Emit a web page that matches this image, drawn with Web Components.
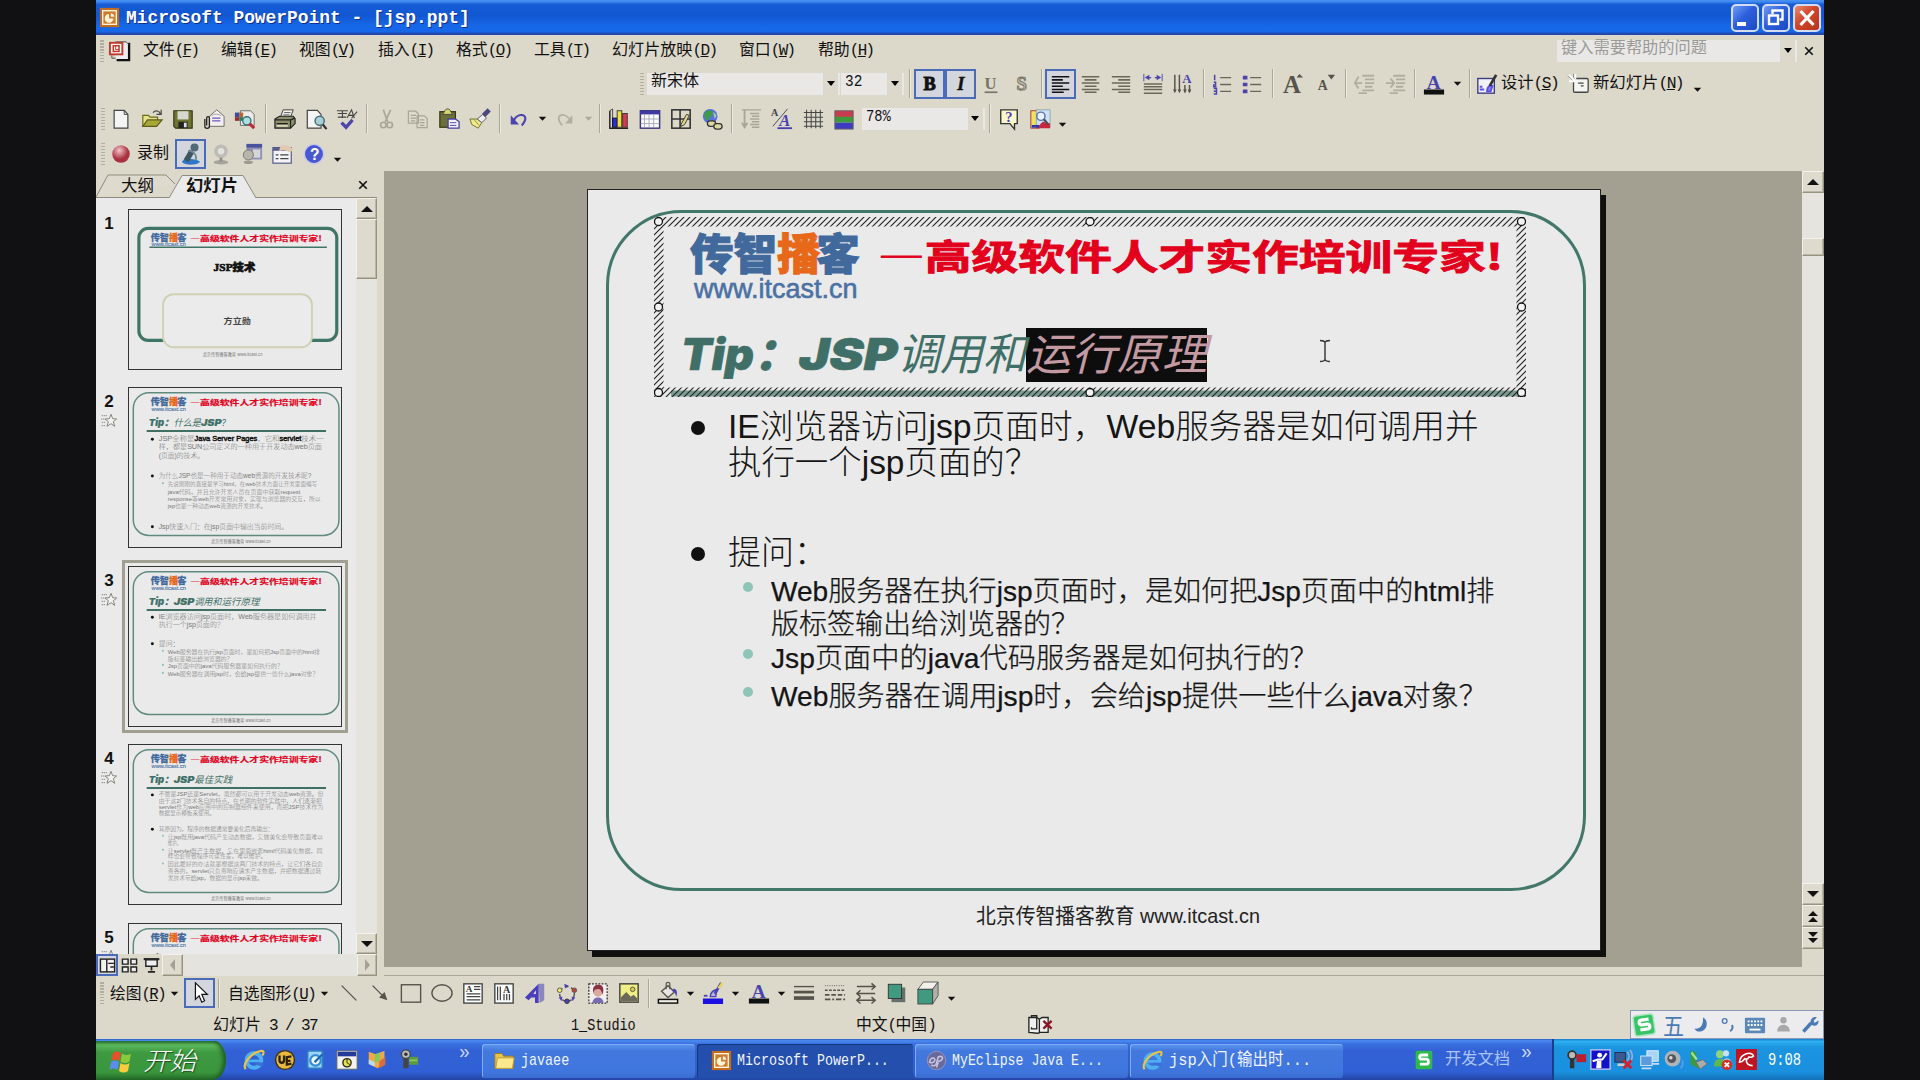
<!DOCTYPE html>
<html lang="zh-CN">
<head>
<meta charset="utf-8">
<title>Microsoft PowerPoint - [jsp.ppt]</title>
<style>
html,body{margin:0;height:1080px;overflow:hidden;background:#111113}
body{display:flex;justify-content:center}
</style>
</head>
<body>
<ppt-app></ppt-app>
<script>
const UI = '"Liberation Mono","Noto Sans CJK SC",monospace';
const make = (host, css, html) => {
  const r = host.shadowRoot || host.attachShadow({mode:'open'});
  r.innerHTML = '<style>*{box-sizing:border-box}' + css + '</style>' + html;
  return r;
};

/* ---------- icon drawings, 24x24 unit boxes ---------- */
const A = (x,y,s,c,extra='') => `<text x="${x}" y="${y}" font-family="Liberation Serif,serif" font-weight="bold" font-size="${s}" fill="${c}" ${extra}>`;
const ie = '<circle cx="12" cy="12.5" r="8" fill="none" stroke="#4fb0f0" stroke-width="4.4"/><path d="M6 13H18" stroke="#4fb0f0" stroke-width="3"/><path d="M13 14.6h9v4.5l-9-2z" fill="#3b6fd8"/><path d="M3 22C-1 17 8 4 20 2c4-.5 2 4 1 5" fill="none" stroke="#e8c44a" stroke-width="2.4"/>';
const ppt = '<rect x="1" y="1" width="22" height="22" fill="#c46a1c"/><rect x="4.2" y="4.2" width="15.6" height="15.6" fill="#cf7a2c" stroke="#fff3dc" stroke-width="1.6"/><path d="M11.5 8a5 5 0 1 0 5 5h-5z" fill="#fff3dc"/><path d="M13.5 7v4h4c0-2-2-4-4-4z" fill="#fff3dc"/>';
const person = '<path d="M6 23c0-4 3-6 6-6s6 2 6 6z" fill="#7b6bb0"/><circle cx="12" cy="11" r="5" fill="#d9a9a0"/><path d="M7 13c-2-9 3-10 5-10s8 0 5 11c-1-5-3-7-6-6-3 0-4 2-4 5z" fill="#8a3040"/>';
const I = {
 ppt,
 doc:'<path d="M8 3h14v18H8z" fill="#eee"/><path d="M22 4v18H9" fill="none" stroke="#111" stroke-width="2.4"/><path d="M8 3h11l3 3" fill="none" stroke="#444"/><rect x="2" y="4" width="13" height="12" fill="#fff" stroke="#c0392b" stroke-width="2"/><rect x="5.5" y="7" width="6" height="6" fill="none" stroke="#c0392b" stroke-width="1.6"/><path d="M8 7v4h3" fill="none" stroke="#c0392b"/><path d="M4 17v3h4" fill="none" stroke="#555"/>',
 new:'<path d="M4.500 2.500h11l4 4.500v15h-15z" fill="#f4f4f2" stroke="#444" stroke-width="1.300"/><path d="M15.500 2.500v4.500h4" fill="none" stroke="#444"/>',
 open:'<path d="M2 20V8h6l2 2h8v3" fill="#e9e28c" stroke="#6c6c18" stroke-width="1.3"/><path d="M2 20l5-7h16l-6 7z" fill="#a8a838" stroke="#5c5c14" stroke-width="1.3"/><path d="M13 5c3-3 7-2 8 1m1-4v5h-5" fill="none" stroke="#444" stroke-width="1.3"/>',
 save:'<path d="M2 3h20v19H4l-2-2z" fill="#6f7530" stroke="#34380f" stroke-width="1.3"/><rect x="6" y="3.500" width="12" height="9" fill="#d6d8d0"/><rect x="7" y="15" width="10" height="7" fill="#222"/><rect x="13" y="16" width="3" height="5" fill="#ddd"/>',
 mail:'<path d="M7 9l8-7 8 7v11H7z" fill="#f3f1ee" stroke="#666"/><path d="M10 11h9M10 14h9" stroke="#6a58c8" stroke-width="1.5"/><path d="M9 9c2-3 9-3 11 0" fill="none" stroke="#999"/><path d="M2 12v8c0 3 5 3 5 0v-9c0-2-3-2-3 0v8" fill="none" stroke="#222" stroke-width="1.4"/>',
 search:'<path d="M7 3h11l4 4v12H7z" fill="#ecebea" stroke="#666"/><rect x="1" y="5" width="5" height="5" fill="#3b4da0"/><rect x="6" y="5" width="4" height="5" fill="#b86430"/><rect x="1" y="10" width="5" height="4" fill="#9d2b2b"/><rect x="6" y="10" width="4" height="4" fill="#2e7d5b"/><circle cx="14" cy="14" r="4.500" fill="#a9e0e0" stroke="#3d6f78" stroke-width="1.5"/><path d="M17 17l5 5" stroke="#c3283c" stroke-width="3.4"/>',
 print:'<path d="M7 10l3-8h11l-3 8z" fill="#f1f1ef" stroke="#333"/><path d="M11 5h7M10 7.500h7" stroke="#555"/><path d="M1 12l5-3h15l2 3v5l-5 5H1z" fill="#8d8f6a" stroke="#222" stroke-width="1.3"/><path d="M1 13h17v9M18 13l5-2M3 17h12" fill="none" stroke="#222" stroke-width="1.3"/><path d="M3 19.500h12" stroke="#d8d8c0" stroke-width="2"/>',
 preview:'<path d="M2.500 2.500h11l4 4.500v15h-15z" fill="#f4f4f2" stroke="#444" stroke-width="1.300"/><circle cx="16" cy="14" r="5" fill="#a9d0d4" stroke="#48707a" stroke-width="1.6"/><path d="M19.500 18l4 5" stroke="#333" stroke-width="2.400"/>',
 spell:'<path d="M1 3h12M2 6h10M2 10h9M7 3v8M12 11l5-9 3 9M13 8h6M17 11l6-7" stroke="#444" stroke-width="1.2" fill="none"/><path d="M6 16l5 5 7-8" fill="none" stroke="#4d46a8" stroke-width="3.6"/>',
 cut:'<path d="M8 2l5 14M16 2l-6 13" stroke="#aaa695" stroke-width="1.8"/><circle cx="8" cy="18.500" r="3" fill="none" stroke="#aaa695" stroke-width="1.8"/><circle cx="15" cy="18.500" r="3" fill="none" stroke="#aaa695" stroke-width="1.8"/>',
 copy:'<g fill="#dedacd" stroke="#a9a594" stroke-width="1.3"><path d="M1.500 3.500h8l3 3v10h-11zM11 8.500h8l3 3v10H11z"/><path d="M4 8h6M4 11h6M4 14h5M14 13h5M14 16h5M14 19h5"/></g>',
 paste:'<rect x="2" y="4" width="17" height="17" fill="#6b7038" stroke="#34360f" stroke-width="1.3"/><path d="M7 4c1-4 6-4 7 0l2 3H5z" fill="#d8d26a" stroke="#444"/><path d="M11 12h8l4 3v7H11z" fill="#f4f2fa" stroke="#4a40a0" stroke-width="1.4"/><path d="M13 16h7M13 19h7" stroke="#4a40a0"/>',
 brush:'<path d="M1 12h8l5 4-4 6-7-4z" fill="#efe98c" stroke="#6c6c30"/><path d="M9 12l6-5 4 4-5 5z" fill="#eee" stroke="#555"/><path d="M16 8l6-6" stroke="#4b4680" stroke-width="5"/><path d="M5 12l6 7" stroke="#8a8a4a"/>',
 undo:'<path d="M6 14C10 6 18 6 19 11c0 3-2 6-4 8" fill="none" stroke="#4a43b0" stroke-width="2.2"/><path d="M3 8v10h9z" fill="#4a43b0"/>',
 redo:'<path d="M18 14C14 6 6 6 5 11c0 3 2 6 4 8" fill="none" stroke="#b4b0a0" stroke-width="1.8"/><path d="M20 8v9h-8z" fill="#b4b0a0"/>',
 chart:'<path d="M2 3v19h20" fill="none" stroke="#222" stroke-width="1.6"/><path d="M2 3l3-2v19" fill="none" stroke="#444"/><rect x="5" y="11" width="5" height="10" fill="#2b2be0" stroke="#111"/><rect x="10" y="3" width="5" height="18" fill="#f0e23a" stroke="#333"/><rect x="16" y="6" width="5" height="15" fill="#d83a50" stroke="#333"/>',
 table:'<rect x="1.500" y="3" width="21" height="19" fill="#fbfbfb" stroke="#3d3a7c" stroke-width="1.600"/><rect x="1.500" y="3" width="21" height="4" fill="#3f3aa0"/><path d="M6 7v14M11 7v14M16 7v14M2 12h20M2 17h20" stroke="#a8a8b8"/>',
 tabpen:'<rect x="2" y="2" width="20" height="20" fill="none" stroke="#333" stroke-width="1.700"/><path d="M11 2v20M2 12h20" stroke="#333" stroke-width="1.7"/><path d="M12 18l6-11 3 1-5 10-4 2z" fill="#e4dc84" stroke="#333"/>',
 link:'<circle cx="10" cy="9" r="8" fill="#5a6fe0"/><path d="M6 3c5-2 8 1 7 4s-4 2-4 5-4 1-5-2 0-6 2-7z" fill="#3f9a4a"/><path d="M13 4l4 4-2 4z" fill="#9fd0a0"/><rect x="7" y="14" width="9" height="6" rx="3" fill="#ddd8a0" stroke="#333" stroke-width="1.400"/><rect x="14" y="17" width="9" height="6" rx="3" fill="#ddd8a0" stroke="#333" stroke-width="1.400"/>',
 expand:'<path d="M5 2v17M2 16l3 5 3-5" fill="none" stroke="#aaa695" stroke-width="2"/><path d="M2 2h21M11 6h10M13 9h8M11 12h10M13 15h8M11 18h10M13 21h8" stroke="#aaa695" stroke-width="1.500"/>',
 aa:`<path d="M2 20L18 1" stroke="#444"/>${A(0,9,11,'#444')}A</text>${A(9,20,18,'#4a3fb0','font-style="italic"')}A</text><path d="M7 22h16" stroke="#4a3fb0" stroke-width="2"/>`,
 grid:'<path d="M5 2v20M10 2v20M15 2v20M20 2v20M2 5h21M2 10h21M2 15h21M2 20h21" stroke="#444" stroke-width="1.100"/>',
 color:'<rect x="2" y="3" width="20" height="7" fill="#c83c50"/><rect x="2" y="9.500" width="20" height="6.500" fill="#3f9a3c"/><rect x="2" y="16" width="20" height="7" fill="#3d3cc0"/><rect x="2" y="3" width="20" height="20" fill="none" stroke="#666"/>',
 qhelp:`<path d="M3 2h18v15h-3v6l-5-6H3z" fill="#fbf8cc" stroke="#333" stroke-width="1.500"/>${A(8,15,16,'#4a3fb0')}?</text>`,
 research:'<rect x="2" y="3" width="9" height="19" fill="#f1df62" stroke="#a33"/><rect x="8" y="2" width="15" height="19" fill="#cfe0f4" stroke="#8aa"/><path d="M8 22l7-7 8 2v5z" fill="#c8283c"/><path d="M3 20h8" stroke="#2838b0" stroke-width="3"/><circle cx="13" cy="9" r="4.500" fill="#e8f2ff" stroke="#5a74b8" stroke-width="1.6"/><path d="M16 12l5 6" stroke="#455" stroke-width="2.4"/>',
 bold:A(5,19,20,'#111','stroke="#111"')+'B</text>',
 italic:A(8,19,20,'#111','font-style="italic" stroke="#111" stroke-width=".5"')+'I</text>',
 under:A(5,17,18,'#777465')+'U</text><path d="M5 21h14" stroke="#777465" stroke-width="1.800"/>',
 shadow:A(7,20,20,'#b8b4a4')+'S</text>'+A(6,19,20,'none','stroke="#777465"')+'S</text>',
 al:'<path d="M2 4h19M2 7.500h12M2 11h19M2 14.500h12M2 18h19M2 21h13" stroke="#111" stroke-width="1.700"/>',
 ac:'<path d="M2 4h19M5 7.500h13M2 11h19M5 14.500h13M2 18h19M5 21h13" stroke="#6b685a" stroke-width="1.700"/>',
 ar:'<path d="M2 4h20M9 7.500h13M2 11h20M9 14.500h13M2 18h20M9 21h13" stroke="#6b685a" stroke-width="1.700"/>',
 dist:'<path d="M2 1v8M22 1v8" stroke="#4a43b0"/><path d="M3 5l5-3v6zM21 5l-5-3v6z" fill="#4a43b0"/><path d="M6 5h4M14 5h4" stroke="#4a43b0" stroke-width="1.500"/><path d="M2 12h20M2 15h20M2 18h20M2 22h20" stroke="#6b685a" stroke-width="1.700"/>',
 vert:'<path d="M2 2v18M7 2v18M13 13v8M18 13v8" stroke="#55534a" stroke-width="1.600"/><path d="M0 18l2 4 2-4zM5 18l2 4 2-4zM11 18l2 4 2-4zM16 18l2 4 2-4z" fill="#55534a"/>'+A(10,11,14,'#4a43b0')+'A</text>',
 nums:'<path d="M10 5h12M10 12.500h12M10 20h12" stroke="#6b685a" stroke-width="1.500"/><path d="M4 2v6M3 10h2v3H3v2h3M3 17h3v6H3M3 20h3" stroke="#4a43b0" stroke-width="1.600" fill="none"/>',
 buls:'<path d="M10 5h12M10 12.500h12M10 20h12" stroke="#6b685a" stroke-width="1.500"/><path d="M2 3h5v4H2zM2 10.500h5v4H2zM2 18h5v4H2z" fill="#4a43b0"/>',
 bigA:A(1,22,27,'#55534a')+'A</text><path d="M16 5l3-4 4 4z" fill="#55534a"/>',
 smA:A(4,19,15,'#55534a')+'A</text><path d="M15 2h8l-4 5z" fill="#55534a"/>',
 dec:'<path d="M9 3h13M12 7h10M12 11h10M12 15h8M9 19h13M5 22h9M5 4l-4 7 4 6M1 11h8" stroke="#b2ae9d" stroke-width="2" fill="none"/>',
 inc:'<path d="M9 3h13M12 7h10M12 11h10M12 15h8M9 19h13M5 22h9M6 6l4 5-4 5M1 11h8" stroke="#b2ae9d" stroke-width="2" fill="none"/>',
 fontc:A(4,17,21,'#4a43b0')+'A</text><rect x="1" y="18" width="22" height="5.500" fill="#111"/>',
 design:'<rect x="2" y="6" width="18" height="16" fill="#f2f2f6" stroke="#3d3a80" stroke-width="1.500"/><path d="M4 18h5M4 15h3M12 20c0-5 3-7 6-6l-2 6z" stroke="#5a4fe0" stroke-width="2" fill="#8a7ff0"/><path d="M15 14l7-12" stroke="#333" stroke-width="3"/>',
 nslide:'<rect x="6" y="6" width="16" height="15" rx="1.500" fill="#f4f4f0" stroke="#444" stroke-width="1.400"/><path d="M11 11h6M14 14h3" stroke="#444" stroke-width="1.500"/><path d="M1 2l7 7M8 1v6M1 9h6M2 6l5 2" stroke="#fff" stroke-width="2"/><path d="M0 3l5 5M6 1v4" stroke="#888"/>',
 rec:'<radialGradient id="g" cx=".4" cy=".3"><stop offset="0" stop-color="#f3c4c8"/><stop offset="1" stop-color="#a83040"/></radialGradient><circle cx="12" cy="12" r="10.500" fill="url(#g)"/>',
 mic:'<path d="M3 20c0-4 15-4 18 0-2 3-15 4-18 0z" fill="#2f78c8"/><path d="M13 9l-6 10" stroke="#3e5664" stroke-width="5.500"/><circle cx="15.500" cy="5.500" r="4" fill="#4f6a78"/><path d="M9 9c5 0 9 3 8 9" fill="none" stroke="#6c8694" stroke-width="1.600"/>',
 cam:'<ellipse cx="12" cy="21" rx="8" ry="2.500" fill="#a5a49c"/><circle cx="12" cy="9" r="7.500" fill="#bdbcb6"/><circle cx="12" cy="9" r="3.500" fill="#e2e2de"/><path d="M12 16v4" stroke="#8d8c86" stroke-width="3"/>',
 cam2:'<rect x="6" y="1" width="17" height="17" fill="#8f92b4"/><rect x="6" y="1" width="17" height="4" fill="#4a539c"/><rect x="13" y="7" width="8" height="9" fill="#d4d4dc"/><circle cx="8" cy="13" r="5.500" fill="#b7b5ac" stroke="#77756c"/><ellipse cx="8" cy="21" rx="5" ry="2" fill="#9d9b92"/>',
 cam3:'<rect x="1" y="5" width="20" height="17" fill="#f4f4f8" stroke="#555a88" stroke-width="1.300"/><path d="M1 7h20" stroke="#555a88" stroke-width="3"/><path d="M4 13h3M4 17h3M9 13h9M9 17h9" stroke="#444" stroke-width="1.500"/><path d="M8 9c0-8 6-7 9-6l6 3-3 5c-4-3-8-4-12-2z" fill="#e2c8b0"/>',
 bhelp:`<circle cx="12" cy="12" r="10.500" fill="#4a58d0" stroke="#c4c8ee" stroke-width="1.500"/><text x="7.500" y="18" font-family="Liberation Sans" font-weight="bold" font-size="17" fill="#fff">?</text>`,
 cursor:'<path d="M7 1v18l4-4 3 7 3-1.500-3-7h6z" fill="#fff" stroke="#111" stroke-width="1.300"/>',
 line:'<path d="M4 4l16 16" stroke="#55534a" stroke-width="1.400"/>',
 arrow:'<path d="M4 4l13 13" stroke="#55534a" stroke-width="1.400"/><path d="M20 20l-9-3 6-6z" fill="#55534a"/>',
 rect:'<rect x="1.500" y="3" width="21" height="19" fill="none" stroke="#55534a" stroke-width="1.500"/>',
 oval:'<ellipse cx="12" cy="12" rx="11" ry="9" fill="none" stroke="#55534a" stroke-width="1.500"/>',
 tbox:'<rect x="2" y="2" width="20" height="21" fill="#fff" stroke="#444" stroke-width="1.500"/><path d="M13 5h7M13 8h7M5 13h15M5 16h15M5 19.500h15" stroke="#444" stroke-width="1.500"/>'+A(4,11,10,'#333')+'A</text>',
 vbox:'<rect x="2" y="2" width="20" height="21" fill="#fff" stroke="#444" stroke-width="1.500"/><path d="M5 5v15M8 5v15M12 13v7M15 13v7M18 13v7" stroke="#444" stroke-width="1.400"/>'+A(11,12,11,'#333')+'A</text>',
 wart:'<path d="M16 2h6v18l-5 3z" fill="#8a86c0"/><path d="M1 17L16 2v21h-4v-6H8l-3 3z" fill="#4a3fb8"/><path d="M10 13l3-4v4z" fill="#dcd8ca"/>',
 diag:'<circle cx="12" cy="13" r="8" fill="none" stroke="#555" stroke-width="1.600" stroke-dasharray="4 3"/><circle cx="4" cy="9" r="2.500" fill="#f0e860" stroke="#555"/><circle cx="20" cy="9" r="2.500" fill="#c83c3c" stroke="#555"/><circle cx="12" cy="21" r="2.500" fill="#4a3fb8" stroke="#333"/><path d="M9 2l5 2-4 3z" fill="#4a3fb8"/><path d="M3 17l4-1-1 5zM21 17l-4-1 1 5z" fill="#4a3fb8"/>',
 clip:'<rect x="2" y="2" width="20" height="21" fill="#f1eeee" stroke="#333" stroke-width="1.400" stroke-dasharray="2 1.500"/>'+person,
 pic:'<rect x="2" y="2" width="20" height="20" fill="#f0ee86" stroke="#444" stroke-width="1.600"/><circle cx="16" cy="8" r="2.500" fill="#d8c84a" stroke="#555"/><path d="M3 21v-4l6-6 5 5 3-2 4 4v3z" fill="#6d6a5a"/>',
 fill:'<path d="M5 10l7-6 7 7-7 6z" fill="#e8e6e0" stroke="#55534a" stroke-width="1.500"/><path d="M10 8V2c0-2 4-2 4 0v6" fill="none" stroke="#55534a" stroke-width="1.300"/><path d="M18 7c5 1 4 6 3 9-1-3-1-5-4-6z" fill="#4a43b0"/><rect x="1.500" y="19" width="21" height="4" fill="#efede6" stroke="#111" stroke-width="1.600"/>',
 lcol:'<path d="M9 16c0-6 5-7 7-8l-1 8z" fill="#b8b0f0" stroke="#4a43b0" stroke-width="1.500"/><path d="M14 13l7-12" stroke="#4a43b0" stroke-width="3"/><path d="M18 7l4-6" stroke="#e8d850" stroke-width="2.500"/><path d="M2 15h4" stroke="#4a43b0" stroke-width="2"/><rect x="1" y="18" width="22" height="6" fill="#1c10e0"/>',
 lines:'<path d="M1 5h22" stroke="#55534a" stroke-width="1.500"/><path d="M1 11h22" stroke="#55534a" stroke-width="3"/><path d="M1 17.500h22" stroke="#55534a" stroke-width="4"/>',
 dash:'<path d="M1 4h22" stroke="#55534a" stroke-dasharray="1 1.500"/><path d="M1 9h22" stroke="#55534a" stroke-width="1.500" stroke-dasharray="3 1.500"/><path d="M1 14h22" stroke="#55534a" stroke-width="2" stroke-dasharray="5 2"/><path d="M1 19h22" stroke="#55534a" stroke-width="2" stroke-dasharray="6 2 2 2"/>',
 arrs:'<path d="M2 5h20M18 1.500L22 5l-4 3.500M22 12.500H2M6 9l-4 3.500L6 16M2 20h20M18 16.500l4 3.500-4 3.500M6 16.500L2 20l4 3.500" fill="none" stroke="#55534a" stroke-width="1.600"/>',
 shad:'<rect x="6" y="6" width="15" height="16" fill="#66706a"/><rect x="2.500" y="2.500" width="14.500" height="15.500" fill="#3f9a80" stroke="#333" stroke-width="1"/>',
 cube:'<path d="M1 8l6-8h16l-6 8z" fill="#f2f0ea" stroke="#555"/><path d="M17 8l6-8v15l-6 9z" fill="#b0b2aa" stroke="#555"/><rect x="1" y="8" width="16" height="16" fill="#3f9a80" stroke="#444"/>',
 vnorm:'<rect x="2" y="3" width="20" height="18" fill="#f2f2f2" stroke="#222" stroke-width="2"/><path d="M11 3v18M13 9h8M16 14h5" stroke="#222" stroke-width="2"/>',
 vsort:'<path d="M2 3h8v7H2zM14 3h8v7h-8zM2 14h8v7H2zM14 14h8v7h-8z" fill="#eee" stroke="#222" stroke-width="2"/>',
 vshow:'<path d="M1 3h22" stroke="#222" stroke-width="3"/><path d="M4 4h16v9H4z" fill="#eee" stroke="#222" stroke-width="2"/><path d="M12 13v6M7 21h10" stroke="#222" stroke-width="2.400"/>',
 star:'<path d="M15 2l2.500 6.500 6 .5-5 4 2 7-5.500-4-6 4 2-7-5-4 6.500-.5z" fill="#f2f2f0" stroke="#77756c" stroke-width="1.300"/><path d="M1 4h9M0 9h5M1 14h5M1 19h5" stroke="#77756c" stroke-width="1.200" stroke-dasharray="2 1"/>',
 book:'<path d="M1 4h9l3 2 3-2h7v17h-9l-3 1-10-1z" fill="#f0f0ee" stroke="#222" stroke-width="1.500"/><path d="M13 6v16M4 4v-2h6v15h-6v-2M4 17h6" fill="none" stroke="#222" stroke-width="1.500"/>',
 redx:'<path d="M3 4l18 17M21 4L3 21" stroke="#8a1424" stroke-width="5"/>',
 ie,
 ue:'<circle cx="12" cy="12" r="11" fill="#3a3010"/><circle cx="12" cy="12" r="9.500" fill="#e8b840"/><path d="M6 7v5c0 4 5 4 5 0V7M19 8l-5 1v8l5-1M14 13h4" fill="none" stroke="#2c230a" stroke-width="2.500"/>',
 outlook:'<rect x="3" y="2" width="17" height="20" rx="2" fill="#9fd4f4" stroke="#2f7fc4" stroke-width="2"/><circle cx="12" cy="13" r="6" fill="#e8f6ff" stroke="#2f8fd4" stroke-width="2.500"/><path d="M11 15l9-9" stroke="#1f66b4" stroke-width="2.500"/>',
 win:'<rect x="1" y="2" width="22" height="20" fill="#f2f2ee" stroke="#666"/><rect x="2" y="3" width="20" height="5" fill="#223a9a"/><circle cx="12" cy="15" r="4.500" fill="#e8e04a" stroke="#222" stroke-width="1.500"/><path d="M12 11v4l3 2" stroke="#222" fill="none"/>',
 map:'<path d="M2 3l8 3 10-4v14l-8 6-10-5z" fill="#f0a848"/><path d="M9 6l6-2v9l-6 3z" fill="#8cc858"/><path d="M2 12l7 3v5l-7-3z" fill="#b8dcf4"/><path d="M14 14l7-5v9l-7 4z" fill="#d86c3c"/>',
 tool:'<circle cx="9" cy="6" r="5" fill="#bbb" stroke="#444" stroke-width="1.500"/><rect x="6" y="10" width="6" height="12" fill="#444"/><circle cx="9" cy="6" r="2" fill="#333"/><rect x="13" y="9" width="10" height="9" fill="#5f9a3c"/><path d="M13 13h9" stroke="#8fc45c" stroke-width="2"/>',
 folder:'<path d="M1 4h8l2 3h11v14H1z" fill="#e8c44c" stroke="#9a7a1c"/><path d="M4 9h19l-2 12H2z" fill="#fbe88c" stroke="#b89a3c"/>',
 ecl:'<circle cx="12" cy="12" r="10.500" fill="#6a6a9a"/><circle cx="12" cy="12" r="10.500" fill="none" stroke="#9a98c0"/><path d="M4 14c1-6 7-6 6-2-1 3-5 3-6 2zm2 3c2 2 5 1 6-2l2-7c4-2 7 1 3 4-1 1-3 1-4 0m-1 8 2-6" fill="none" stroke="#c8c4dc" stroke-width="1.800"/>',
 sg:'<rect x="2" y="1" width="20" height="22" rx="2" fill="#2fb84c"/><path d="M17 6H9c-3 0-3 5 0 5h6c3 0 3 6 0 6H7" fill="none" stroke="#fff" stroke-width="3.400"/>',
 sg2:'<g transform="rotate(-8 12 12)"><rect x="1" y="2" width="21" height="21" rx="3" fill="#36c466" stroke="#a8e4bc" stroke-width="1.500"/><path d="M17 7H9c-3 0-3 5 0 5h6c3 0 3 5 0 5H7" fill="none" stroke="#fff" stroke-width="3.400"/></g>',
 t1:'<circle cx="7" cy="7" r="4.500" fill="#bbb" stroke="#333" stroke-width="2"/><rect x="4.500" y="11" width="5" height="11" fill="#333"/><rect x="12" y="6" width="11" height="9" fill="#b8202c"/>',
 t2:'<rect x="1" y="1" width="22" height="22" fill="#1212c8" stroke="#c8c8f4" stroke-width="1.500"/><circle cx="11" cy="7" r="2.800" fill="#fff"/><path d="M7 22l1-9h5v9z" fill="#fff"/><path d="M3 14l6-2h5l5-7" stroke="#fff" stroke-width="2.400" fill="none"/>',
 t3:'<rect x="1" y="4" width="12" height="11" fill="#3c5a8c" stroke="#1c2c50"/><path d="M4 18h8" stroke="#ccc" stroke-width="3"/><path d="M15 3c3 3 3 7 0 10M18 1c4 4 4 10 0 14" stroke="#9fb0d0" stroke-width="1.800" fill="none"/><path d="M11 13l9 9M20 13l-9 9" stroke="#d8202c" stroke-width="3.200"/>',
 t4:'<rect x="9" y="2" width="13" height="12" fill="#a8d4f8" stroke="#e8f4ff"/><rect x="2" y="8" width="13" height="11" fill="#5c9cd8" stroke="#e0f0ff"/><path d="M3 22h11M15 17h8" stroke="#c8dcf0" stroke-width="2"/>',
 t5:'<circle cx="11" cy="11" r="9" fill="#b0b4b8"/><circle cx="10" cy="11" r="5" fill="#50565c"/><circle cx="9" cy="10" r="2" fill="#ddd"/><path d="M20 22c3-3 3-6 2-9" stroke="#5f9cf0" stroke-width="2" fill="none"/>',
 t6:'<path d="M3 2l7 2-1 9 6 4-4 5-8-5z" fill="#3c9a3c"/><path d="M9 15l8-3 5 5-8 6z" fill="#a8aca8" stroke="#666"/><path d="M4 4l6 8" stroke="#a8e488" stroke-width="2.500"/>',
 t7:'<circle cx="9" cy="6" r="4.500" fill="#8fd47c"/><path d="M2 20c0-12 14-12 14 0z" fill="#5cb84c"/><circle cx="16" cy="5" r="3.500" fill="#c8e4f4"/><path d="M12 15c2-7 9-5 10 0z" fill="#b8d0e0"/><circle cx="17" cy="18" r="6" fill="#d83020"/><path d="M14.500 15.500l5 5M19.500 15.500l-5 5" stroke="#fff" stroke-width="2"/>',
 t8:'<rect x="0" y="0" width="24" height="24" fill="#c01420"/><path d="M4 15C5 5 18 2 20 8c-2 2-3 2-5 1-1 2-3 3-5 2-2 3-4 4-6 4zM12 11c-1 6 3 8 7 8" fill="none" stroke="#fff" stroke-width="1.800"/>',
 moon:'<path d="M14 2c8 3 8 19-5 20-3 0-5-1-7-4 10 1 13-8 12-16z" fill="#4a7ab4"/>',
 punct:'<circle cx="7" cy="6" r="3.500" fill="none" stroke="#4a7ab4" stroke-width="2"/><path d="M18 12c2 4 0 8-3 9" stroke="#4a7ab4" stroke-width="3" fill="none"/>',
 kb:'<rect x="1" y="4" width="22" height="17" rx="1" fill="#5c88b8"/><path d="M4 8h17M4 12h17" stroke="#fff" stroke-width="2" stroke-dasharray="2 1.500"/><path d="M6 17h12" stroke="#fff" stroke-width="2"/>',
 user:'<circle cx="12" cy="6" r="4.500" fill="#a8a8a8"/><path d="M3 22c0-13 18-13 18 0z" fill="#a8a8a8"/>',
 wrench:'<path d="M3 21l10-11" stroke="#4a7ab4" stroke-width="4.500"/><path d="M20 3l-4 4 1 3 5-3c1 5-4 9-9 5-3-5 2-11 7-9z" fill="#4a7ab4"/>',
 flag:'<path d="M3 4c3-2 5-2 8 0L9.500 12c-3-2-5-2-8 0z" fill="#e8502c"/><path d="M12 4.500c3 2 6 2 9 0l-1.500 8c-3 2-6 2-9 0z" fill="#8ac83c"/><path d="M1 13c3-2 5-2 8 0l-1.500 8c-3-2-5-2-8 0z" fill="#5c8cf0"/><path d="M10.500 14c3 2 6 2 9 0L18 22c-3 2-6 2-9 0z" fill="#f8cc3c"/>',
 tiny:'<path d="M2 7h20L12 18z" fill="#111"/>',
 tinyg:'<path d="M2 7h20L12 18z" fill="#aeaa9a"/>',
 x:'<path d="M3 3l18 18M21 3L3 21" stroke="#111" stroke-width="4"/>'
};

/* icon centred in a cell: n name, w cell width, s drawn size, on = pressed frame */
class PptIcon extends HTMLElement{
  connectedCallback(){
    const w=this.getAttribute('w')||31, s=this.getAttribute('s')||22, h=this.getAttribute('h')||s, m=this.getAttribute('m')||0;
    make(this,`:host{display:flex;flex:none;align-items:center;justify-content:center;width:${w}px;height:30px;margin-left:${m}px}
     :host([on]){background:#d3d6dc;border:2px solid #4a6cb8}
     :host([low]){padding-top:11px}
     svg{display:block;flex:none;overflow:visible}`,
    `<svg width="${s}" height="${h}" viewBox="0 0 24 24" preserveAspectRatio="none">${I[this.getAttribute('n')]}</svg>`);
  }
}
class BarSep extends HTMLElement{
  connectedCallback(){make(this,`:host{display:flex;flex:none;justify-content:center;width:${this.getAttribute('w')||8}px;height:29px}i{width:1px;background:#aba898;box-shadow:1px 0 #edeae0}`,'<i></i>');}
}
class BarGrip extends HTMLElement{
  connectedCallback(){make(this,`:host{display:block;flex:none;width:4px;height:22px;margin-left:${this.getAttribute('m')||4}px;background:repeating-linear-gradient(#b3af9f 0 1.500px,transparent 1.500px 3px)}`,'');}
}
/* horizontal bar of tools */
class ToolBar extends HTMLElement{
  connectedCallback(){make(this,`:host{display:flex;flex:none;align-items:center;height:${this.getAttribute('h')}px;width:100%;padding-left:${this.getAttribute('p')||0}px;font:16px/20px ${UI};color:#111}
   :host([drop]) ::slotted(fit-text){margin-top:3px}`,'<slot></slot>');}
}
class ComboBox extends HTMLElement{
  connectedCallback(){make(this,`:host{display:flex;flex:none;align-items:stretch;height:22px;width:${this.getAttribute('w')}px;margin-left:${this.getAttribute('m')||0}px;background:#eae8e6;padding-left:4px}
   div{flex:1;display:flex;align-items:center;margin-top:-3px}b{width:15px;background:#dcd9cc;display:flex;align-items:center;justify-content:center;margin-right:2px}`,
   '<div><slot></slot></div><b><svg width="8" height="5"><path d="M0 0h8L4 5z"/></svg></b>');}
}
class XpButton extends HTMLElement{
  connectedCallback(){const d=this.getAttribute('d');const p={up:'M1 10L7 4l6 6z',down:'M1 4h12l-6 6z',left:'M9 1v12L4 7z',right:'M5 1v12l5-6z',up2:'M2 7l5-5 5 5zM2 13l5-5 5 5z',down2:'M2 1h10L7 6zM2 7h10l-5 5z',none:''}[d];
   make(this,`:host{display:flex;flex:none;align-items:center;justify-content:center;background:#dedacd;border:1px solid;border-color:#f4f2ea #96937f #96937f #f4f2ea;box-shadow:inset -1px -1px #bbb7a6}`,
   `<svg width="14" height="14"><path d="${p}" fill="${this.hasAttribute('dis')?'#a5a294':'#111'}"/></svg>`);}
}
/* window caption buttons */
class CaptionButton extends HTMLElement{
  connectedCallback(){const k=this.getAttribute('k');
   make(this,`:host{display:block;flex:none;width:28px;height:28px;border:2px solid #d4dcf4;border-radius:5px;background:${k=='x'?'linear-gradient(135deg,#e88a6a,#d0452a 45%,#b83418)':'linear-gradient(135deg,#6f9bf4,#2d5fdc 45%,#1c49c4)'}}svg{display:block}`,
   `<svg width="24" height="24" fill="none" stroke="#fff">${k=='min'?'<path d="M4 18h9" stroke-width="4"/>':k=='max'?'<path d="M8.500 8V4.500h10v9h-3" stroke-width="2.400"/><rect x="5" y="9.500" width="9" height="8.500" stroke-width="2.400"/>':'<path d="M5.500 5l13 14M18.500 5l-13 14" stroke-width="3.200"/>'}</svg>`);}
}

/* ---------- slides ---------- */
class SlideHeader extends HTMLElement{
  connectedCallback(){make(this,`
   :host{position:absolute;left:103px;top:38px;display:flex;width:812px;height:74px}
   .l{width:170px;color:#41699c;display:flex;flex-direction:column}
   .c{font:900 43px/48px "Liberation Sans","Noto Sans CJK SC",sans-serif;height:46px;margin-top:4px;-webkit-text-stroke:1px}
   .c i{font-style:normal;color:#e8681a}
   .u{font:27px/26px "Liberation Sans",sans-serif;-webkit-text-stroke:.6px;margin:-1px 0 0 4px;color:#4b71a4}
   .s{font:bold 35px/40px "Noto Sans CJK SC",sans-serif;color:#e2001c;-webkit-text-stroke:.9px;margin:8px 0 0 18px}`,
   `<div class="l"><fit-text class="c" w="170">传智<i>播</i>客</fit-text><fit-text class="u" w="164">www.itcast.cn</fit-text></div>
    <fit-text class="s" w="625">—高级软件人才实作培训专家!</fit-text>`);}
}
const SLIDES={
 2:{title:[['Tip：','k',118],['什么是','c',130],['JSP','k',97],['?','c',22]],
   body:[[1,241,783,32,'JSP全称是<b>Java Server Pages</b>，它和<b>servlet</b>技术一'],[0,279,775,32,'样，都是SUN公司定义的一种用于开发动态web页面'],[0,320,215,32,'(页面)的技术。'],[1,416,725,32,'为什么JSP也是一种用于动态web资源的开发技术呢?'],[2,457,710,25,'先说刚刚的直接是学习html，在web技术方面让开发里面编写'],[3,495,630,25,'java代码，并且允许开发人员在页面中获取request'],[3,528,727,25,'response等web开发常用对象，实现与浏览器的交互，所以'],[3,562,468,25,'jsp也是一种动态web资源的开发技术。'],[1,657,615,32,'Jsp快速入门：在jsp页面中输出当前时间。']]},
 3:{title:[['Tip：','k',118],['JSP','k',98],['调用和','c',129],['运行原理','s',181]],
   body:[[1,237,751,33,'IE浏览器访问jsp页面时，Web服务器是如何调用并'],[0,273.200,310,33,'执行一个jsp页面的？'],[1,364,99,33,'提问：'],[2,403,723,28,'Web服务器在执行jsp页面时，是如何把Jsp页面中的html排'],[3,436,308,28,'版标签输出给浏览器的？'],[2,470.500,547,28,'Jsp页面中的java代码服务器是如何执行的？'],[2,508.500,716,28,'Web服务器在调用jsp时，会给jsp提供一些什么java对象？']]},
 4:{title:[['Tip：','k',118],['JSP','k',98],['最佳实践','c',180]],
   body:[[1,235,783,27,'不管是JSP还是Servlet，虽然都可以用于开发动态web资源。但'],[0,266,775,27,'由于这2门技术各自的特点，在长期的软件实践中，人们逐渐把'],[0,296,783,27,'servlet作为web应用中的控制器组件来使用，而把JSP技术作为'],[0,325,267,27,'数据显示模板来使用。'],[1,398,545,27,'其原因为，程序的数据通常要美化后再输出：'],[2,436,738,25,'让jsp既用java代码产生动态数据，又做美化会导致页面难以'],[3,467,63,25,'维护。'],[2,503,735,25,'让servlet既产生数据，又在里面嵌套html代码美化数据，同'],[3,530,468,25,'样也会导致程序可读性差，难以维护。'],[2,568,738,25,'因此最好的办法就是根据这两门技术的特点，让它们各自负'],[3,600,730,25,'责各的，servlet只负责响应请求产生数据，并把数据通过转'],[3,633,452,25,'发技术带给jsp，数据的显示jsp来做。']]},
 5:{title:[['Tip：','k',118],['JSP','k',98],['语法','c',90]],body:[]}
};
class SlidePage extends HTMLElement{
  connectedCallback(){
    const n=this.getAttribute('n'), live=this.hasAttribute('live');
    const base=`:host{display:block;position:relative;width:1014px;height:762px;background:#eaeaea;overflow:hidden;font-family:"Liberation Sans","Noto Sans CJK SC",sans-serif;color:#151515}
     .foot{position:absolute;left:389px;top:715px;font:21px/24px "Liberation Sans","Noto Sans CJK SC",sans-serif;color:#222}
     svg{position:absolute;left:0;top:0}`;
    const foot='<fit-text class="foot" w="284">北京传智播客教育 www.itcast.cn</fit-text>';
    if(n==='1'){
      make(this,base+`.t{position:absolute;left:402px;top:240px;font:900 48px/70px "Liberation Serif","Noto Sans CJK SC",serif;-webkit-text-stroke:3px;color:#111}
        .a{position:absolute;left:449px;top:500px;font-size:40px;line-height:56px;color:#444}.h{position:absolute;left:0;top:64px;width:1014px;height:120px}.foot{top:676px;left:350px;color:#777}`,
       `<svg width="1014" height="762" fill="none"><rect x="47" y="87" width="940" height="532" rx="44" stroke="#3f7566" stroke-width="15"/><path d="M97 177h843" stroke="#3f7566" stroke-width="8"/><rect x="162" y="400" width="707" height="252" rx="50" fill="#ebebeb" stroke="#cfd0b4" stroke-width="9"/></svg>
        <div class="h" style="top:-4px"><slide-header></slide-header></div><fit-text class="t" w="198">JSP技术</fit-text><fit-text class="a" w="130">方立勋</fit-text>${foot}`.replace('top:-4px','top:64px'));
      return;
    }
    const S=SLIDES[n]; let cur=0, rows='';
    for(const [lv,mid,w,fs,t] of S.body){
      const mt=(mid-fs/2-cur); cur=mid+fs/2;
      rows+=`<div class="r l${lv}" style="margin-top:${mt}px;height:${fs}px;font-size:${fs}px;line-height:${fs}px"><i></i><fit-text w="${w}">${t}</fit-text></div>`;
    }
    const title=S.title.map(([t,c,w])=>`<fit-text class="${c}" w="${w}">${t}</fit-text>`).join('');
    const sw=live?3:7;
    make(this,base+`
      .title{position:absolute;left:94px;top:139px;display:flex;height:54px;font:italic 44px/53px "Inter","Noto Sans CJK SC",sans-serif;color:#3f6f66}
      .k{font-weight:900;-webkit-text-stroke:.7px}.c,.s{font-weight:400}
      .s{color:${live?'#c39aa2':'inherit'};${live?'background:#0d0d0d;height:54px;':''}}
      .body{position:absolute;left:104px;top:0;width:880px;display:flow-root;font-weight:300;${live?'':'color:#777;'}}
      .r{display:flex;align-items:center}
      .r i{flex:none;width:37px}.l1 i::before{content:"";display:block;width:14px;height:14px;border-radius:50%;background:#111;margin-top:3px}
      .l2 i,.l3 i{width:80px;padding-left:52px}.l2 i::before{content:"";display:block;width:10px;height:10px;border-radius:50%;background:#8fc4b8;margin-bottom:10px}
      .l2,.l3{${live?'-webkit-text-stroke:.25px;':''}}
      ${live?'':'.foot{color:#777}'}
      b{color:#111;-webkit-text-stroke:2px}`,
     `<svg width="1014" height="762" fill="none"><rect x="20.500" y="22.500" width="977" height="678" rx="74" stroke="${live?'#43776a':'#5f8a80'}" stroke-width="${sw}"/><path d="M84 204.500H936" stroke="#3f7063" stroke-width="${live?6:9}"/></svg>
      <slide-header></slide-header><div class="title">${title}</div><div class="body">${rows}</div>${foot}`);
  }
}
class SlideThumb extends HTMLElement{
  connectedCallback(){const n=this.getAttribute('n');make(this,`
   :host{display:flex;flex:none;height:178.400px;position:relative;font:bold 17px/20px "Liberation Sans",sans-serif;color:#111}
   .n{width:32px;display:flex;flex-direction:column;align-items:center;padding:5px 6px 0 0}
   .n ppt-icon{height:18px}
   .f{width:214px;height:161px;border:1.500px solid #333;overflow:hidden;background:#eaeaea}
   slide-page{transform:scale(.2105);transform-origin:0 0}
   :host([sel]) .f{box-shadow:0 0 0 3px #eaeaea,0 0 0 6px #a19e92;outline:0}`,
   `<div class="n">${n}${n>1?'<ppt-icon n="star" w="18" s="16"></ppt-icon>':''}</div><div class="f"><slide-page n="${n}"></slide-page></div>`);}
}
/* hatched text-box frame with eight handles */
class EditFrame extends HTMLElement{
  connectedCallback(){
    const W=872,H=180,pts=[[4.5,4.5],[436,4.5],[867.5,4.5],[4.5,90],[867.5,90],[4.5,175.5],[436,175.5],[867.5,175.5]];
    make(this,`:host{position:absolute;left:66.500px;top:28px;width:${W}px;height:${H}px}svg{display:block}`,
    `<svg width="${W}" height="${H}"><defs><pattern id="p" width="6" height="6" patternUnits="userSpaceOnUse"><path d="M-1 7L7 -1M-1 1L1 -1M5 7L7 5" stroke="#222" stroke-width="1.150"/></pattern></defs>
     <path fill="#eaeaea" fill-opacity=".35" fill-rule="evenodd" d="M0 0H${W}V${H}H0zM9.500 9.500V${H-9.5}H${W-9.5}V9.500z"/><path fill="url(#p)" fill-rule="evenodd" d="M0 0H${W}V${H}H0zM9.500 9.500V${H-9.5}H${W-9.5}V9.500z"/>${pts.map(p=>`<circle cx="${p[0]}" cy="${p[1]}" r="4" fill="#f2f2f2" stroke="#111" stroke-width="1.300"/>`).join('')}</svg>`);}
}
class SlidesPane extends HTMLElement{
  connectedCallback(){make(this,`
   :host{display:flex;flex-direction:column;flex:none;width:288px;height:805px;background:#dcd8ca;font:16px/20px ${UI};color:#111}
   .tabs{height:27px;display:flex;position:relative;flex:none;align-items:center}
   .tabs svg{position:absolute;left:0;top:0}.tabs>fit-text{position:relative;margin-top:4px}
   .mid{display:flex;height:756px;flex:none;width:281px}
   .list{width:260px;background:#eaeaea;overflow:hidden;display:flex;flex-direction:column;padding-top:11px}
   .sc{width:21px;background:#e5e4df;display:flex;flex-direction:column}
   .bot{display:flex;height:22px;width:281px;background:#e4e3dd}
   .v{display:flex;background:#dcd8ca;align-items:center;width:66px}.v ppt-icon{height:22px}`,
   `<div class="tabs"><svg width="288" height="27"><path d="M0 26L12 4H70L79 13" fill="#dedacd" stroke="#8f8c7e"/><path d="M73 27L86 4.500H147L160 27" fill="#eaeaea" stroke="#8f8c7e"/><path d="M0 26.500H73M160 26.500H281" stroke="#8f8c7e"/></svg>
      <fit-text w="33" m="25">大纲</fit-text><fit-text w="52" m="32" style="font-weight:bold">幻灯片</fit-text><ppt-icon n="x" s="10" w="12" m="119"></ppt-icon></div>
    <div class="mid"><div class="list"><slide-thumb n="1"></slide-thumb><slide-thumb n="2"></slide-thumb><slide-thumb n="3" sel></slide-thumb><slide-thumb n="4"></slide-thumb><slide-thumb n="5"></slide-thumb></div>
      <div class="sc"><xp-button d="up" style="height:21px"></xp-button><xp-button d="none" style="height:60px"></xp-button><xp-button d="down" style="height:21px;margin-top:auto"></xp-button></div></div>
    <div class="bot"><div class="v"><ppt-icon n="vnorm" on w="22" s="17"></ppt-icon><ppt-icon n="vsort" w="22" s="17"></ppt-icon><ppt-icon n="vshow" w="22" s="17"></ppt-icon></div><xp-button d="left" dis style="width:21px"></xp-button><xp-button d="right" dis style="width:20px;margin-left:auto"></xp-button></div>`);}
}
class SlideStage extends HTMLElement{
  connectedCallback(){make(this,`
   :host{display:flex;flex-direction:column;width:1440px;height:805px;background:#dcd8ca}
   .top{display:flex;height:796px}
   .ws{width:1418px;background:#a3a092;padding:18px 0 0 203px}
   .card{position:relative;width:1014px;height:762px;box-shadow:5px 6px 0 0 #10100c}
   .card::after{content:"";position:absolute;inset:0;border:1.500px solid #222;pointer-events:none}
   .sc{width:22px;background:#e5e4df;display:flex;flex-direction:column}
   xp-button{height:22px}
   .ib{position:absolute;left:729px;top:150px}
   .b{height:9px;border-bottom:1px solid #aaa797}`,
   `<div class="top"><div class="ws"><div class="card"><slide-page n="3" live></slide-page><edit-frame></edit-frame>
     <svg class="ib" width="18" height="24" fill="none" stroke="#333" stroke-width="1.400"><path d="M4 1.500c3 0 4.500.5 5 2 .5-1.500 2-2 5-2M9 3v18M4 22.500c3 0 4.500-.5 5-2 .5 1.500 2 2 5 2"/></svg></div></div>
     <div class="sc"><xp-button d="up"></xp-button><xp-button d="none" style="margin-top:45px;height:18px"></xp-button><xp-button d="down" style="margin-top:auto"></xp-button><xp-button d="up2"></xp-button><xp-button d="down2"></xp-button><span style="height:18px;background:#dcd8ca"></span></div></div><div class="b"></div>`);}
}
class TaskButton extends HTMLElement{
  connectedCallback(){const a=this.hasAttribute('active');make(this,`
   :host{display:flex;flex:none;align-items:center;width:${this.getAttribute('w')}px;height:34px;margin:2px 1px 0 1px;padding-left:11px;border-radius:3px;color:#f0f4fc;font:17px/20px ${UI};
    background:${a?'#244fac':'linear-gradient(#5f95ee,#4379de 20%,#3f76de 80%,#3a6cd0)'};box-shadow:inset 1px 1px ${a?'#16387e':'#7dabf6'}}`,
   `<ppt-icon n="${this.getAttribute('i')}" w="22" s="21" ></ppt-icon><slot></slot>`);}
}
class TaskBar extends HTMLElement{
  connectedCallback(){make(this,`
   :host{display:flex;flex:none;height:41px;width:100%;align-items:center;background:linear-gradient(#2c5cc0 0,#4a8af0 4%,#3a6fe0 12%,#3260d4 30%,#3160d6 80%,#2244a4);color:#fff;font:16px/20px ${UI}}
   .start{width:130px;height:39px;margin-top:2px;display:flex;align-items:center;background:linear-gradient(#2f7a34,#5cb85c 10%,#3d9a40 30%,#3a963c 80%,#256c2a);border-radius:0 12px 14px 0/0 20px 20px 0;box-shadow:inset -3px 0 4px #1f5c24}
   .start fit-text{font:italic 25px/30px "Liberation Sans","Noto Sans CJK SC",sans-serif;text-shadow:1px 1px 1px #1c4a20;font-weight:300}
   .tray{margin-left:auto;width:272px;height:41px;display:flex;align-items:center;border-left:2px solid #12408c;padding-left:10px;background:linear-gradient(#1c7cd0,#2cb0f0 6%,#1c94e0 20%,#1a90de 80%,#1470b8)}
   .tray fit-text{font-size:18px}
   .q{display:flex;margin-left:12px}`,
   `<div class="start"><ppt-icon n="flag" m="14" w="24" s="24"></ppt-icon><fit-text w="53" m="9">开始</fit-text></div>
    <div class="q"><ppt-icon n="ie"></ppt-icon><ppt-icon n="ue"></ppt-icon><ppt-icon n="outlook" s="21"></ppt-icon><ppt-icon n="win" s="22"></ppt-icon><ppt-icon n="map" s="21"></ppt-icon><ppt-icon n="tool" s="21"></ppt-icon></div>
    <fit-text w="11" m="35" style="margin-top:-14px;font-size:20px;color:#c8d8f8">»</fit-text>
    <task-button w="213" i="folder" style="margin-left:12px"><fit-text w="48" m="6">javaee</fit-text></task-button>
    <task-button w="216" i="ppt" active style="padding-left:13px"><fit-text w="152" m="5">Microsoft PowerP...</fit-text></task-button>
    <task-button w="213" i="ecl" style="padding-left:10px"><fit-text w="151" m="5">MyEclipse Java E...</fit-text></task-button>
    <task-button w="213" i="ie" style="padding-left:11px"><fit-text w="142" m="6">jsp入门(输出时...</fit-text></task-button>
    <ppt-icon n="sg" m="70" w="20" s="20"></ppt-icon><fit-text w="65" m="11" style="color:#a8c4f4">开发文档</fit-text><fit-text w="11" m="11" style="margin-top:-14px;font-size:20px;color:#c8d8f8">»</fit-text>
    <div class="tray">${[1,2,3,4,5,6,7,8].map(i=>`<ppt-icon n="t${i}" w="24.400" s="21"></ppt-icon>`).join('')}<fit-text w="33" m="9">9:08</fit-text></div>`);}
}
class PptApp extends HTMLElement{
  connectedCallback(){
    const ic=(n,w,x='')=>`<ppt-icon n="${n}" w="${w||31}" ${x}></ppt-icon>`, sep=w=>`<bar-sep w="${w||8}"></bar-sep>`;
    const dd=(w,n='tiny')=>ic(n,w,'s="9"'), ov=(w,m=0)=>ic('tiny',w,`s="9" low m="${m}"`);
    const many=(l,w)=>l.split(' ').map(n=>ic(n,w)).join('');
    const menu=[['文件','F'],['编辑','E'],['视图','V'],['插入','I'],['格式','O'],['工具','T'],['幻灯片放映','D',104.5],['窗口','W'],['帮助','H']]
      .map(([t,k,w],i)=>`<fit-text w="${w||55.500}" m="${i?22.700:12}">${t}<i>(<u>${k}</u>)</i></fit-text>`).join('');
    make(this,`
     :host{display:flex;flex-direction:column;width:1728px;height:1080px;background:#dcd8ca;overflow:hidden}
     .cap{height:35px;flex:none;display:flex;align-items:center;padding:0 3px 0 2px;background:linear-gradient(#4a94f4 0,#3a84ee 6%,#165cd6 12%,#1257d2 45%,#1768e8 75%,#1768e8 90%,#2344a8 97%);color:#fff}
     .cap fit-text{font:bold 18px/24px ${UI};text-shadow:1px 1px #10308c}
     .btns{margin-left:auto;display:flex;gap:3px}
     .work{display:flex;height:805px;flex:none}
     .ime{margin-left:auto;width:194px;height:29px;display:flex;align-items:center;background:#ecebee;border:1px solid #8a9ab4;padding-left:1px}
     .ime fit-text{font:24px/26px "Noto Sans CJK SC",sans-serif;color:#4a7ab4}`,
    `<div class="cap">${ic('ppt',22,'s="21"')}<fit-text w="344" m="6">Microsoft PowerPoint - [jsp.ppt]</fit-text><div class="btns"><caption-button k="min"></caption-button><caption-button k="max"></caption-button><caption-button k="x"></caption-button></div></div>
     <tool-bar h="31"><bar-grip m="4"></bar-grip>${ic('doc',23,'m="4" s="23"')}${menu}<combo-box w="240" m="684"><fit-text w="146" style="color:#9a9a96">键入需要帮助的问题</fit-text></combo-box>${ic('x',12,'s="10" m="6"')}</tool-bar>
     <tool-bar h="35"><bar-grip m="544"></bar-grip><combo-box w="193" m="3"><fit-text w="48">新宋体</fit-text></combo-box><combo-box w="63" m="1"><fit-text w="17" style="font-size:17px">32</fit-text></combo-box>${sep(10)}${ic('bold',31,'on')}${ic('italic',31,'on')}${ic('under',29)}${ic('shadow',33)}${sep(7)}${ic('al',31,'on')}${ic('ac',29)}${ic('ar',32)}${ic('dist',31)}${ic('vert',31)}${sep(8)}${ic('nums',29)}${ic('buls',32)}${sep(9)}${ic('bigA',32)}${ic('smA',32)}${sep(8)}${ic('dec',31)}${ic('inc',31)}${sep(7)}${ic('fontc',31)}${dd(16)}${sep(8)}${ic('design',28)}<fit-text w="57">设计<i>(<u>S</u>)</i></fit-text>${ic('nslide',26,'m="8"')}<fit-text w="90" m="1">新幻灯片<i>(<u>N</u>)</i></fit-text>${ov(12,8)}</tool-bar>
     <tool-bar h="35"><bar-grip m="5"></bar-grip>${many('new open save mail search',31.2)}${sep(9)}${many('print preview spell',31)}${sep(8)}${many('cut copy paste brush',31.2)}${sep(8)}${ic('undo',31)}${dd(15)}${ic('redo',31)}${dd(15,'tinyg')}${sep(8)}${many('chart table tabpen link',31)}${sep(8)}${many('expand aa grid color',31)}<combo-box w="123" m="2"><fit-text w="25" style="font-size:17px">78%</fit-text></combo-box>${sep(9)}${ic('qhelp',31)}${ic('research',31)}${ov(12,1)}</tool-bar>
     <tool-bar h="35"><bar-grip m="5"></bar-grip>${ic('rec',22,'m="5" s="20"')}<fit-text w="32" m="5">录制</fit-text>${ic('mic',31,'on m="6" s="24"')}${many('cam cam2 cam3 bhelp',30.8)}${ov(14,1)}</tool-bar>
     <div class="work"><slides-pane></slides-pane><slide-stage></slide-stage></div>
     <tool-bar h="34" drop><bar-grip m="4"></bar-grip><fit-text w="55" m="6">绘图<i>(<u>R</u>)</i></fit-text>${dd(18)}${ic('cursor',31,'on m="1"')}${sep(7)}<fit-text w="87" m="6">自选图形<i>(<u>U</u>)</i></fit-text>${dd(18)}${many('line arrow rect oval tbox vbox wart diag clip pic',31.15)}${sep(8)}${ic('fill',31)}${dd(14)}${ic('lcol',31.5)}${dd(14)}${ic('fontc',31.5)}${dd(14)}${many('lines dash arrs shad cube',31.1)}${ov(14,1)}</tool-bar>
     <tool-bar h="29" drop><fit-text w="104" m="117">幻灯片<i> 3 / 37</i></fit-text><fit-text w="65" m="254" style="font-size:17px">1_Studio</fit-text><fit-text w="79" m="220">中文<i>(</i>中国<i>)</i></fit-text>${ic('book',22,'m="92" s="21"')}${ic('redx',12,'m="-8" s="11"')}
       <div class="ime">${ic('sg2',25,'s="23"')}<fit-text w="21" m="6">五</fit-text>${ic('moon',20,'s="17" m="7"')}${ic('punct',24,'s="16" m="5"')}${ic('kb',24,'s="22" m="3"')}${ic('user',20,'s="17" m="6"')}${ic('wrench',22,'s="19" m="6"')}</div></tool-bar>
     <task-bar></task-bar>`);
  }
}
/* single text run, scaled horizontally to its assigned width */
class FitText extends HTMLElement{
  connectedCallback(){
    const w=+this.getAttribute('w');
    const r=make(this,`:host{display:block;flex:none;white-space:pre;width:${w}px;margin-left:${this.getAttribute('m')||0}px}span{display:inline-block;vertical-align:top;transform-origin:0 50%}::slotted(i){font-style:normal;letter-spacing:-.1em}`,'<span><slot></slot></span>');
    const s=r.querySelector('span'); const n=s.offsetWidth;
    if(n) s.style.transform=`scaleX(${w/n})`;
  }
}
for(const [n,c] of [['ppt-icon',PptIcon],['bar-sep',BarSep],['bar-grip',BarGrip],['tool-bar',ToolBar],['combo-box',ComboBox],['xp-button',XpButton],['caption-button',CaptionButton],['slide-header',SlideHeader],['slide-page',SlidePage],['slide-thumb',SlideThumb],['edit-frame',EditFrame],['slides-pane',SlidesPane],['slide-stage',SlideStage],['task-button',TaskButton],['task-bar',TaskBar],['ppt-app',PptApp],['fit-text',FitText]]) customElements.define(n,c);
</script>
</body>
</html>
